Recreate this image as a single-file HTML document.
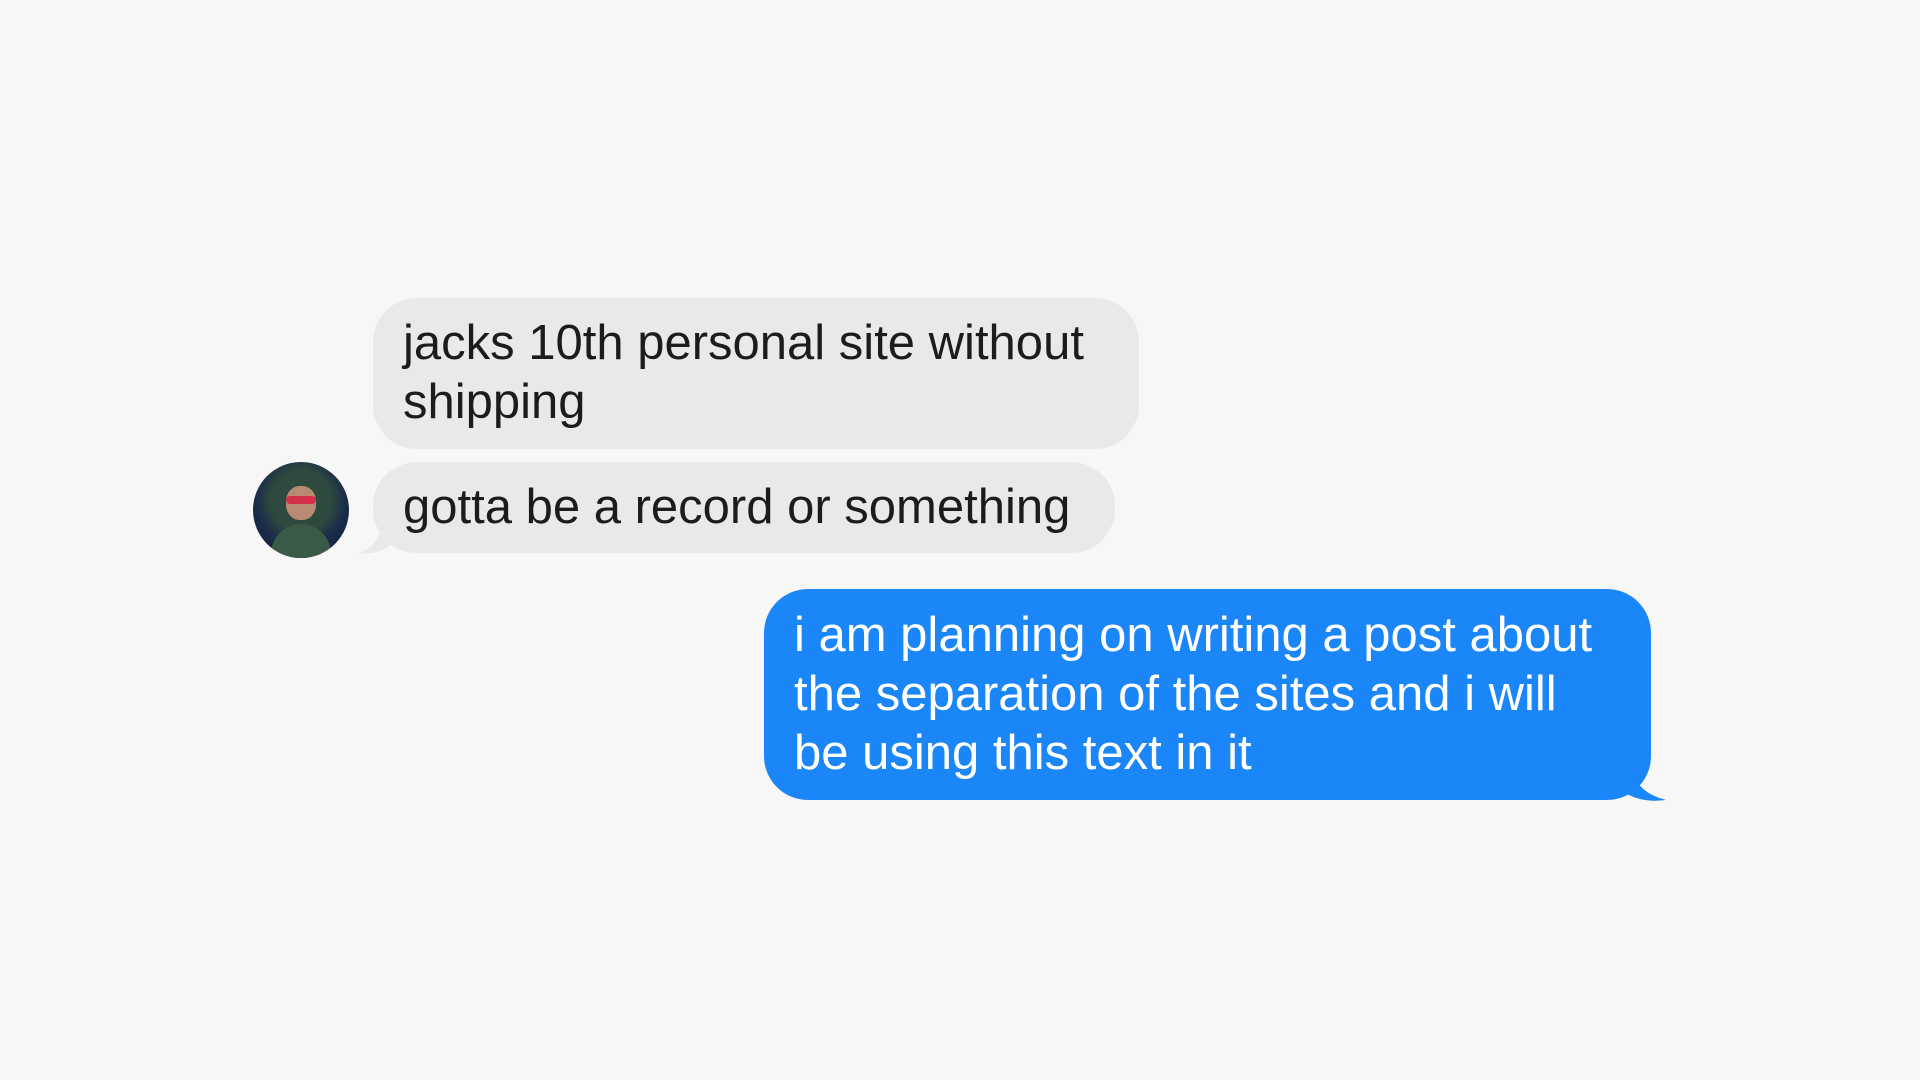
<!DOCTYPE html>
<html><head><meta charset="utf-8"><style>
html,body{margin:0;padding:0;width:1920px;height:1080px;background:#f7f7f7;overflow:hidden;font-family:"Liberation Sans",sans-serif}
.b{position:absolute;font-size:49px;line-height:59px;box-sizing:border-box;padding:16px 30px;border-radius:44px;white-space:nowrap}
.g{background:#e9e9eb;color:#1c1c1e}
.bl{background:#1b86f7;color:#fff}
</style></head><body>
<div class="b g" style="left:373px;top:298px;width:766px;height:151px">jacks 10th personal site without<br>shipping</div>
<div class="b g" style="left:373px;top:462px;width:742px;height:91px;padding-top:16px">gotta be a record or something</div>
<svg style="position:absolute;left:355px;top:515px" width="40" height="40"><path d="M28 0 C28 20 18 34 4 38 C16 40 30 36 38 28 Z" fill="#e9e9eb"/></svg>
<div style="position:absolute;left:253px;top:462px;width:96px;height:96px;border-radius:50%;background:radial-gradient(circle at 50% 40%,#c0394a 0 10%,#2e4a3e 11% 40%,#1a2c4a 60%,#0e1a33);overflow:hidden">
<div style="position:absolute;left:33px;top:24px;width:30px;height:34px;border-radius:45%;background:#b98a72"></div>
<div style="position:absolute;left:33px;top:34px;width:30px;height:8px;background:#d3304a;border-radius:4px"></div>
<div style="position:absolute;left:18px;top:62px;width:60px;height:40px;border-radius:30px 30px 0 0;background:#3a5a48"></div>
</div>
<div class="b bl" style="left:764px;top:589px;width:887px;height:211px;padding-top:17px">i am planning on writing a post about<br>the separation of the sites and i will<br>be using this text in it</div>
<svg style="position:absolute;left:1620px;top:760px" width="50" height="42"><path d="M10 0 C12 20 22 34 46 40 C30 42 16 40 4 32 Z" fill="#1b86f7"/></svg>
</body></html>
